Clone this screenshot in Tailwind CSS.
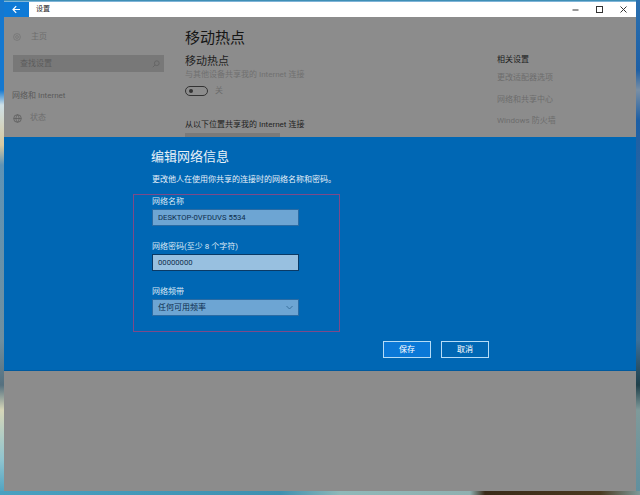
<!DOCTYPE html>
<html lang="zh-CN">
<head>
    <meta charset="UTF-8">
    <title>设置</title>
    <script src="https://cdn.jsdelivr.net/npm/@tailwindcss/browser@4"></script>
</head>
<body class="relative w-[640px] h-[495px] overflow-hidden bg-[#3f8fb5] font-['Roboto','Noto_Sans_CJK_SC',sans-serif]">
    <!-- Wallpaper showing round the window -->
    <div class="absolute left-0 top-0 w-[4px] h-[495px] bg-[linear-gradient(to_bottom,#1478d0_0,#1478d0_90px,#cfe0e6_105px,#d8c9a0_145px,#5f93b5_165px,#6f8f9f_340px,#55707f_385px,#d6d6b8_410px,#8fc4cf_460px,#4aa0c0_495px)]"></div>
    <div class="absolute right-0 top-0 w-[4px] h-[495px] bg-[linear-gradient(to_bottom,#2a70b0_0,#1d5fa5_70px,#7a8fa5_90px,#1d5fa5_120px,#3a6f9a_340px,#20404a_385px,#7f9a9a_410px,#5f8f9f_495px)]"></div>
    <div class="absolute left-0 bottom-0 w-[640px] h-[4px] bg-[linear-gradient(to_right,#4aa0c0_0,#3f90b0_280px,#8fb8b8_340px,#8fb0b0_470px,#3a2a18_485px,#4a3a20_600px,#7f9a9a_640px)]"></div>

    <!-- Window -->
    <div class="relative ml-[4px] mt-[1px] w-[632px] h-[490px] bg-[#8c8c8c] border-t border-[#7fb4d8]">
        <!-- Title bar -->
        <div class="h-[15px] bg-white flex items-center">
            <div class="w-[25px] h-full bg-[#0f7ad6] flex items-center justify-center">
                <svg width="9" height="9" viewBox="0 0 9 9" fill="none" stroke="white" stroke-width="1.2"><path d="M8 4.5H1M4.2 1.2L1 4.5l3.2 3.3"/></svg>
            </div>
            <span class="ml-[7px] text-[7px] text-[#222]">设置</span>
            <div class="ml-auto flex items-center gap-[17px] pr-[9px]">
                <svg width="7" height="7" viewBox="0 0 7 7" stroke="#333" fill="none"><path d="M.5 4h6"/></svg>
                <svg width="7" height="7" viewBox="0 0 7 7" stroke="#333" fill="none"><rect x=".5" y=".5" width="6" height="6"/></svg>
                <svg width="7" height="7" viewBox="0 0 7 7" stroke="#333" fill="none"><path d="M.5.5l6 6M6.5.5l-6 6"/></svg>
            </div>
        </div>

        <!-- Dimmed settings page -->
        <div class="flex h-[120px] overflow-hidden">
            <aside class="w-[181px] pl-[9px] pr-[21px] pt-[15px] text-[8px] leading-[10px] text-[#6e6e6e]">
                <div class="flex items-center gap-[10px] h-[10px]">
                    <svg width="8" height="8" viewBox="0 0 8 8" fill="none" stroke="#757575" stroke-width=".8"><circle cx="4" cy="4" r="3.4"/><circle cx="4" cy="4" r="1.4"/></svg>
                    <span>主页</span>
                </div>
                <div class="mt-[13px] h-[17px] bg-[#787878] flex items-center justify-between pl-[7px] pr-[4px] text-[#5c5c5c]">
                    <span>查找设置</span>
                    <svg width="8" height="8" viewBox="0 0 8 8" fill="none" stroke="#666"><circle cx="4.8" cy="3.2" r="2.4"/><path d="M3 5L.8 7.2"/></svg>
                </div>
                <div class="mt-[19px] -ml-[1px] text-[#5a5a5a]">网络和 Internet</div>
                <div class="mt-[12px] flex items-center gap-[8px] h-[10px]">
                    <svg width="9" height="9" viewBox="0 0 9 9" fill="none" stroke="#5e5e5e" stroke-width=".8"><circle cx="4.5" cy="4.5" r="3.8"/><path d="M.8 4.5h7.4M4.5.7c-2 2.4-2 5.2 0 7.6M4.5.7c2 2.4 2 5.2 0 7.6"/></svg>
                    <span>状态</span>
                </div>
            </aside>
            <main class="w-[310px] pt-[11px]">
                <h1 class="text-[15px] leading-[20px] text-[#151515]">移动热点</h1>
                <h2 class="mt-[7px] text-[11px] leading-[13px] text-[#1e1e1e]">移动热点</h2>
                <p class="mt-[1px] text-[8px] leading-[11px] text-[#707070]">与其他设备共享我的 Internet 连接</p>
                <div class="mt-[5px] flex items-center gap-[7px] text-[8px] text-[#6c6c6c]">
                    <span class="w-[23px] h-[10px] rounded-full border border-[#333] flex items-center pl-[3px]"><span class="w-[4px] h-[4px] rounded-full bg-[#333]"></span></span>
                    <span>关</span>
                </div>
                <p class="mt-[22px] text-[8px] leading-[11px] text-[#222]">从以下位置共享我的 Internet 连接</p>
                <div class="mt-[3px] w-[95px] h-[10px] bg-[#7a7a7a]"></div>
            </main>
            <section class="pt-[37px] pl-[2px] text-[8px] text-[#6c6c6c]">
                <h3 class="text-[#1c1c1c] leading-[11px]">相关设置</h3>
                <p class="mt-[7px] leading-[11px]">更改适配器选项</p>
                <p class="mt-[11px] leading-[11px]">网络和共享中心</p>
                <p class="mt-[10px] leading-[11px]">Windows 防火墙</p>
            </section>
        </div>

        <!-- Edit dialog band -->
        <div class="h-[234px] bg-[#0067b4] border-b border-[#005a9e] pl-[148px] pt-[12px] text-white">
            <h2 class="-ml-[1px] text-[13px] leading-[16px] text-[#e8f1f8]">编辑网络信息</h2>
            <p class="mt-[9px] text-[8px] leading-[11px] text-[#e6f0f8]">更改他人在使用你共享的连接时的网络名称和密码。</p>

            <div class="mt-[9px] w-[147px] pt-[3px]">
                <label class="block text-[8px] leading-[10px] text-[#dbe9f4]">网络名称</label>
                <div class="mt-[2px] h-[17px] bg-[#6da5d3] border border-[#2a6ba3] flex items-center pl-[5px] text-[7.7px] text-[#0c2c4c]">DESKTOP-0VFDUVS 5534</div>

                <label class="block mt-[16px] text-[8px] leading-[10px] text-[#dbe9f4]">网络密码(至少 8 个字符)</label>
                <div class="mt-[2px] h-[17px] bg-[#98c0e0] border border-[#0a3a66] flex items-center pl-[5px] text-[7.7px] text-[#0c2c4c]">00000000</div>

                <label class="block mt-[16px] text-[8px] leading-[10px] text-[#dbe9f4]">网络频带</label>
                <div class="mt-[2px] h-[17px] bg-[#6da5d3] border border-[#2a6ba3] flex items-center justify-between pl-[5px] pr-[5px] text-[8px] text-[#0c2c4c]">
                    <span>任何可用频率</span>
                    <svg width="7" height="5" viewBox="0 0 7 5" fill="none" stroke="#3b709c"><path d="M.5 1l3 3 3-3"/></svg>
                </div>
            </div>

            <div class="flex gap-[10px] mt-[25px] ml-[231px] text-[8px]">
                <button class="w-[48px] h-[17px] bg-[#0a78d7] border border-[#b5dcf7]">保存</button>
                <button class="w-[48px] h-[17px] bg-[#0067b4] border border-[#b5dcf7]">取消</button>
            </div>
        </div>
    </div>

    <!-- Red annotation box drawn over the screenshot -->
    <div class="absolute left-[133px] top-[194px] w-[207px] h-[138px] border border-[#7d4a8a]"></div>
</body>
</html>
